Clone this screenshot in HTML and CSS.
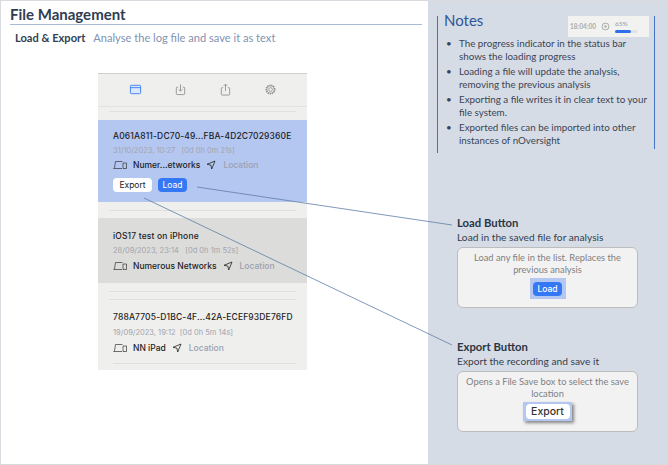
FILE: index.html
```html
<!DOCTYPE html>
<html lang="en">
<head>
<meta charset="utf-8">
<title>File Management</title>
<link rel="stylesheet" href="styles.css">
</head>
<body>
<div class="slide">
  <main class="main">
    <h1 class="title">File Management</h1>
    <p class="subtitle"><b>Load &amp; Export</b><span>Analyse the log file and save it as text</span></p>
    <section class="phone">
      <div class="tabs">
        <svg class="tab" viewBox="0 0 14 14"><path d="M2.500 2.500h9a1 1 0 0 1 1 1v7a1 1 0 0 1-1 1h-9a1 1 0 0 1-1-1v-7a1 1 0 0 1 1-1zM1.500 5h11" fill="#dbe7fb" stroke="#3f7fee" stroke-width="1"/></svg>
        <svg class="tab" viewBox="0 0 14 14"><path d="M4.500 4.500H3.500a1 1 0 0 0-1 1v6a1 1 0 0 0 1 1h7a1 1 0 0 0 1-1v-6a1 1 0 0 0-1-1H9.500M7 1.500v7M5 6.800l2 2 2-2" fill="none" stroke="#8b8b8b" stroke-width=".9"/></svg>
        <svg class="tab" viewBox="0 0 14 14"><path d="M4.500 5H3.500a1 1 0 0 0-1 1v6a1 1 0 0 0 1 1h7a1 1 0 0 0 1-1V6a1 1 0 0 0-1-1H9.500M7 8.500V1.200M5 3.200l2-2 2 2" fill="none" stroke="#8b8b8b" stroke-width=".9"/></svg>
        <svg class="tab" viewBox="0 0 14 14"><circle cx="7" cy="7" r="2" fill="none" stroke="#8b8b8b" stroke-width=".8"/><circle cx="7" cy="7" r="4.600" fill="none" stroke="#8b8b8b" stroke-width="1.600" stroke-dasharray="1.300 .9"/><circle cx="7" cy="7" r="3.900" fill="none" stroke="#8b8b8b" stroke-width=".6"/></svg>
      </div>
      <div class="rule rule-first"></div>
      <article class="rec rec-blue">
        <div class="rec-title">A061A811-DC70-49...FBA-4D2C7029360E</div>
        <div class="rec-date">31/10/2023, 10:27&nbsp;&nbsp; [0d 0h 0m 21s]</div>
        <div class="rec-meta">
          <svg class="ico-dev" viewBox="0 0 14 10"><path d="M2.500 1.500h7M2.500 1.500L1.500 8M.3 8.500h8.700M10 3h3.500v5.500H10z" fill="none" stroke="#333" stroke-width=".7"/></svg>
          <span class="dev">Numer...etworks</span>
          <svg class="ico-loc" viewBox="0 0 10 10"><path d="M9 1L1 4.300l3.900.8.800 3.900z" fill="none" stroke="#222" stroke-width=".8"/></svg>
          <span class="loc">Location</span>
        </div>
        <div class="rec-actions">
          <span class="btn btn-white">Export</span>
          <span class="btn btn-blue">Load</span>
        </div>
      </article>
      <div class="rule rule-a"></div>
      <article class="rec rec-gray">
        <div class="rec-title">iOS17 test on iPhone</div>
        <div class="rec-date">28/09/2023, 23:14&nbsp;&nbsp; [0d 0h 1m 52s]</div>
        <div class="rec-meta">
          <svg class="ico-dev" viewBox="0 0 14 10"><path d="M2.500 1.500h7M2.500 1.500L1.500 8M.3 8.500h8.700M10 3h3.500v5.500H10z" fill="none" stroke="#333" stroke-width=".7"/></svg>
          <span class="dev">Numerous Networks</span>
          <svg class="ico-loc" viewBox="0 0 10 10"><path d="M9 1L1 4.300l3.900.8.800 3.900z" fill="none" stroke="#222" stroke-width=".8"/></svg>
          <span class="loc">Location</span>
        </div>
      </article>
      <div class="rule rule-a"></div>
      <div class="rule rule-b"></div>
      <article class="rec rec-plain">
        <div class="rec-title">788A7705-D1BC-4F...42A-ECEF93DE76FD</div>
        <div class="rec-date">19/09/2023, 19:12&nbsp;&nbsp;[0d 0h 5m 14s]</div>
        <div class="rec-meta">
          <svg class="ico-dev" viewBox="0 0 14 10"><path d="M2.500 1.500h7M2.500 1.500L1.500 8M.3 8.500h8.700M10 3h3.500v5.500H10z" fill="none" stroke="#333" stroke-width=".7"/></svg>
          <span class="dev">NN iPad</span>
          <svg class="ico-loc" viewBox="0 0 10 10"><path d="M9 1L1 4.300l3.900.8.800 3.900z" fill="none" stroke="#222" stroke-width=".8"/></svg>
          <span class="loc">Location</span>
        </div>
      </article>
      <div class="rule rule-c"></div>
    </section>
  </main>
  <aside class="side">
    <section class="notes">
      <div class="notes-inner">
        <div class="notes-head">
          <h2>Notes</h2>
          <div class="status">
            <span class="clock">18:04:00</span>
            <svg class="status-ico" viewBox="0 0 10 10"><circle cx="5" cy="5" r="3.800" fill="none" stroke="#999" stroke-width=".9"/><circle cx="5" cy="5" r="1.300" fill="#aaa"/></svg>
            <div class="prog">
              <span class="pct">65%</span>
              <div class="track"><div class="fill"></div></div>
            </div>
          </div>
        </div>
        <ul class="list">
          <li>The progress indicator in the status bar shows the loading progress</li>
          <li>Loading a file will update the analysis, removing the previous analysis</li>
          <li>Exporting a file writes it in clear text to your file system.</li>
          <li>Exported files can be imported into other instances of nOversight</li>
        </ul>
      </div>
    </section>
    <section class="callout callout-load">
      <h3>Load Button</h3>
      <p class="callout-sub">Load in the saved file for analysis</p>
      <div class="box">
        <p>Load any file in the list. Replaces the previous analysis</p>
        <div class="hl hl-load"><span class="big-load">Load</span></div>
      </div>
    </section>
    <section class="callout callout-export">
      <h3>Export Button</h3>
      <p class="callout-sub">Export the recording and save it</p>
      <div class="box">
        <p>Opens a File Save box to select the save location</p>
        <div class="hl hl-export"><span class="big-export">Export</span></div>
      </div>
    </section>
  </aside>
  <svg class="wires" viewBox="0 0 668 465">
    <path d="M197 187L452 225M144 198L452 345" fill="none" stroke="#5f7ea8" stroke-width=".8"/>
  </svg>
</div>
</body>
</html>
```
FILE: styles.css
```css
* { box-sizing: border-box; }
html, body { margin: 0; padding: 0; }
body { width: 668px; height: 465px; overflow: hidden; background: #fff; font-family: "Lato", "Liberation Sans", sans-serif; }
h1, h2, h3, p, ul { margin: 0; padding: 0; }

.slide { position: relative; display: flex; width: 668px; height: 465px; border-top: 1px solid #d9d9e0; border-left: 1px solid #d9d9e0; border-bottom: 1px solid #d9d9e0; }
.main { width: 427px; flex: none; padding: 5px 0 0 9px; }
.title { font-size: 15px; line-height: 16px; font-weight: 700; color: #2f3d52; height: 19px; border-bottom: 1px solid #a9bbd2; margin-right: 6px; }
.subtitle { display: flex; gap: 8px; margin: 6px 0 0 5px; font-size: 11.100px; line-height: 14px; }
.subtitle b { color: #333f50; }
.subtitle span { color: #7f93b2; }

.phone { width: 209px; height: 297px; margin: 28px 0 0 88px; background: #efefed; border-top: 1px solid #cfcfcf; font-family: "Inter", "Liberation Sans", sans-serif; overflow: hidden; }
.tabs { height: 33px; display: flex; justify-content: space-between; padding: 9px 30px 0 31px; border-bottom: 1px solid #e1e1df; }
.tab { width: 13px; height: 13px; }
.rule { height: 1px; background: #dfdfdd; margin: 0 11px; }
.rule-first { margin-top: 4px; margin-bottom: 8px; }
.rule-a { margin-top: 8px; }
.rule-b { margin-top: 7px; }
.rule-c { margin-top: 8px; margin-left: 15px; }

.rec { padding: 9.500px 15px 0; }
.rec-blue { height: 82px; background: #b4c7f0; }
.rec-gray { height: 65px; margin-top: 7px; padding-top: 11.500px; background: #dcdcda; }
.rec-plain { height: 55px; padding-top: 10.500px; }
.rec-title { font-size: 8.500px; line-height: 13px; font-weight: 500; color: #1d1d1f; white-space: nowrap; letter-spacing: .15px; }
.rec-date { margin-top: 2px; font-size: 7.500px; line-height: 11px; color: #a4a4ad; white-space: nowrap; }
.rec-plain .rec-date { margin-top: 3px; }
.rec-meta { display: flex; align-items: center; gap: 5px; margin-top: 3px; height: 14px; font-size: 8.500px; white-space: nowrap; }
.rec-blue .rec-meta { margin-top: 2px; }
.ico-dev { width: 14px; height: 10px; margin-right: 1px; }
.ico-loc { width: 10px; height: 10px; margin-left: 1px; }
.dev { color: #1d1d1f; font-weight: 500; }
.loc { color: #9aa0b0; font-weight: 500; margin-left: 2px; }
.rec-actions { display: flex; gap: 6px; margin-top: 6.500px; }
.btn { display: block; height: 14px; line-height: 14px; border-radius: 4px; text-align: center; font-size: 8.500px; }
.btn-white { width: 39px; background: #fff; color: #222; }
.btn-blue { width: 29px; background: #3478f6; color: #fff; }

.side { flex: 1; background: #d6dce5; padding: 14px 0 0 9px; color: #333f50; }
.notes { width: 218px; border-left: 1px solid #4472c4; height: 137px; }
.notes-inner { height: 133px; border-right: 1px solid #4472c4; padding: 0 0 0 6px; margin-top: 1px; }
.notes-head { display: flex; justify-content: space-between; height: 21px; }
.notes-head h2 { font-size: 15px; line-height: 8px; font-weight: 400; color: #2f5597; }
.status { width: 81px; height: 21px; margin-right: 5px; background: #f2f2f0; display: flex; align-items: center; padding-left: 2px; gap: 3px; }
.clock { font-size: 6.500px; color: #ababab; font-weight: 700; width: 27px; white-space: nowrap; }
.status-ico { width: 9px; height: 9px; margin-left: 1px; }
.prog { width: 23px; margin-left: 2px; }
.pct { display: block; font-size: 6.500px; line-height: 7px; color: #999; }
.track { height: 3px; width: 23px; margin-top: 3px; background: #e3e3e3; border-radius: 2px; }
.fill { height: 3px; width: 16px; background: #2f6fe8; border-radius: 2px; }
.list { list-style: none; font-size: 9.800px; line-height: 12.700px; color: #3a4455; }
.list li { position: relative; padding-left: 15px; margin-bottom: 2.600px; }
.list li::before { content: "•"; position: absolute; left: 2px; top: 0; }

.callout { margin-left: 20px; width: 181px; }
.callout-load { margin-top: 63px; }
.callout-export { margin-top: 32px; }
.callout h3 { font-size: 11.300px; line-height: 14px; font-weight: 700; color: #2b3545; }
.callout-sub { font-size: 10.200px; line-height: 14px; color: #333f50; white-space: nowrap; }
.box { height: 61px; margin-top: 3px; background: #f2f2f2; border: 1px solid #bdbdbd; border-radius: 6px; padding-top: 4px; text-align: center; }
.box p { font-size: 9.300px; line-height: 12px; color: #7f7f7f; padding: 0 6px; }
.hl { display: flex; align-items: center; justify-content: center; margin: 2px auto 0; background: #b4c7f0; font-family: "Inter", "Liberation Sans", sans-serif; }
.hl-load { width: 36px; height: 21px; }
.big-load { width: 29px; height: 14px; line-height: 14px; border-radius: 4px; background: #3478f6; color: #fff; font-size: 8.500px; font-weight: 500; }
.hl-export { width: 49px; height: 19px; margin-top: 2px; box-shadow: 2px 2px 3px rgba(0, 0, 0, .45); }
.big-export { width: 44px; height: 15px; line-height: 15px; border-radius: 4px; background: #fff; color: #333; font-size: 10.500px; font-weight: 500; }

.wires { position: absolute; left: -1px; top: -1px; width: 668px; height: 465px; pointer-events: none; }
```
